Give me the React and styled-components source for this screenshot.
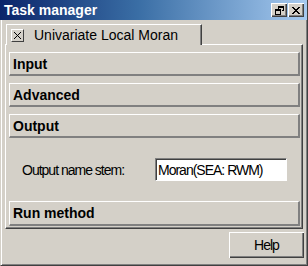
import React from 'react'
import styled, { createGlobalStyle } from 'styled-components'

const face = '#d4d0c8'
const shadow = '#808080'
const dark = '#404040'
const light = '#ffffff'

const GlobalStyle = createGlobalStyle`
  html, body {
    margin: 0;
    padding: 0;
    background: ${face};
  }
`

const Window = styled.div`
  box-sizing: border-box;
  width: 308px;
  height: 266px;
  display: flex;
  flex-direction: column;
  background: ${face};
  border-left: 1px solid ${face};
  border-right: 1px solid ${dark};
  border-bottom: 1px solid ${dark};
  box-shadow: inset 1px 0 0 ${light}, inset -1px -1px 0 ${shadow};
  font-family: 'Liberation Sans', Arial, sans-serif;
  color: #000;
`

const TitleBar = styled.div`
  height: 20px;
  flex: none;
  display: flex;
  align-items: center;
  padding: 0 3px 0 4px;
  margin-left: -1px;
  background: linear-gradient(to right, #0a246a 0%, #3a6ea5 45%, #a6caf0 100%);
`

const Title = styled.span`
  flex: 1;
  color: #fff;
  font-weight: bold;
  font-size: 14px;
`

const CaptionButton = styled.button`
  box-sizing: border-box;
  width: 16px;
  height: 14px;
  padding: 0;
  margin-left: ${p => (p.$gap ? '1px' : '0')};
  display: flex;
  align-items: center;
  justify-content: center;
  background: ${face};
  border: none;
  box-shadow: inset 1px 1px 0 ${light}, inset -1px -1px 0 ${dark}, inset -2px -2px 0 ${shadow};
`

const Body = styled.div`
  flex: 1;
  display: flex;
  flex-direction: column;
  padding: 4px 4px 0 4px;
`

const TabStrip = styled.div`
  display: flex;
  padding-left: 1px;
  position: relative;
  z-index: 1;
`

const Tab = styled.div`
  box-sizing: border-box;
  height: 21px;
  width: 196px;
  display: flex;
  align-items: center;
  gap: 10px;
  padding: 0 0 0 4px;
  background: ${face};
  border-top: 1px solid ${light};
  border-left: 1px solid ${light};
  border-right: 1px solid ${dark};
  box-shadow: inset -1px 0 0 ${shadow};
  font-size: 14px;
`

const CloseBox = styled.span`
  box-sizing: border-box;
  width: 13px;
  height: 13px;
  display: flex;
  align-items: center;
  justify-content: center;
  border-top: 1px solid ${light};
  border-left: 1px solid ${light};
  border-right: 1px solid ${dark};
  border-bottom: 1px solid ${dark};
`

const Pane = styled.div`
  box-sizing: border-box;
  margin-top: -1px;
  display: flex;
  flex-direction: column;
  gap: 7px;
  padding: 7px 2px 2px 3px;
  border-top: 1px solid ${light};
  border-left: 1px solid ${light};
  border-right: 1px solid ${dark};
  border-bottom: 1px solid ${dark};
  box-shadow: inset -1px -1px 0 ${shadow};
`

const SectionHeader = styled.div`
  box-sizing: border-box;
  height: ${p => (p.$tall ? '25px' : '24px')};
  display: flex;
  align-items: center;
  padding-left: 3px;
  font-weight: bold;
  font-size: 14px;
  border-top: 1px solid ${light};
  border-left: 1px solid ${light};
  border-right: 2px solid ${shadow};
  border-bottom: 2px solid ${shadow};
`

const FieldRow = styled.div`
  display: flex;
  align-items: center;
  height: 23px;
  margin: 20px 0 20px 13px;
  font-size: 14px;
  letter-spacing: -1px;
`

const FieldLabel = styled.label`
  width: 133px;
`

const TextBox = styled.div`
  box-sizing: border-box;
  width: 132px;
  height: 23px;
  display: flex;
  align-items: center;
  padding-left: 2px;
  background: #fff;
  border-top: 1px solid ${shadow};
  border-left: 1px solid ${shadow};
  border-right: 1px solid ${light};
  border-bottom: 1px solid ${light};
  box-shadow: inset 1px 1px 0 ${dark};
`

const Footer = styled.div`
  display: flex;
  justify-content: flex-end;
  padding-top: 3px;
`

const HelpButton = styled.button`
  box-sizing: border-box;
  width: 75px;
  height: 26px;
  padding: 0;
  margin-right: -1px;
  background: ${face};
  border: none;
  box-shadow: inset 1px 1px 0 ${light}, inset -1px -1px 0 ${dark}, inset -2px -2px 0 ${shadow};
  font-family: 'Liberation Sans', Arial, sans-serif;
  font-size: 14px;
  letter-spacing: -1px;
  color: #000;
`

const RestoreIcon = () => (
  <svg width="9" height="9" viewBox="0 0 9 9" shapeRendering="crispEdges">
    <path d="M3 0h6v1H3zM3 1h6v1H3zM8 2h1v3H8zM7 4h2v1H7zM3 2h1v1H3z" fill="#000" />
    <path d="M0 3h6v1H0zM0 4h6v1H0zM0 5h1v4H0zM5 5h1v4H5zM0 8h6v1H0z" fill="#000" />
  </svg>
)

const CloseIcon = ({ size = 8 }) => (
  <svg width={size} height={size - 1} viewBox="0 0 8 7" shapeRendering="crispEdges">
    <path d="M0 0h2v1H0zM6 0h2v1H6zM1 1h2v1H1zM5 1h2v1H5zM2 2h4v1H2zM3 3h2v1H3zM2 4h4v1H2zM1 5h2v1H1zM5 5h2v1H5zM0 6h2v1H0zM6 6h2v1H6z" fill="#000" />
  </svg>
)

const SmallX = () => (
  <svg width="7" height="7" viewBox="0 0 7 7" shapeRendering="crispEdges">
    <path d="M0 0h1v1H0zM6 0h1v1H6zM1 1h1v1H1zM5 1h1v1H5zM2 2h1v1H2zM4 2h1v1H4zM3 3h1v1H3zM2 4h1v1H2zM4 4h1v1H4zM1 5h1v1H1zM5 5h1v1H5zM0 6h1v1H0zM6 6h1v1H6z" fill="#000" />
  </svg>
)

export default function App() {
  return (
    <>
      <GlobalStyle />
      <Window>
        <TitleBar>
          <Title>Task manager</Title>
          <CaptionButton aria-label="Restore"><RestoreIcon /></CaptionButton>
          <CaptionButton $gap aria-label="Close"><CloseIcon /></CaptionButton>
        </TitleBar>
        <Body>
          <TabStrip>
            <Tab>
              <CloseBox><SmallX /></CloseBox>
              <span>Univariate Local Moran</span>
            </Tab>
          </TabStrip>
          <Pane>
            <SectionHeader>Input</SectionHeader>
            <SectionHeader>Advanced</SectionHeader>
            <div>
              <SectionHeader>Output</SectionHeader>
              <FieldRow>
                <FieldLabel>Output name stem:</FieldLabel>
                <TextBox>Moran(SEA: RWM)</TextBox>
              </FieldRow>
              <SectionHeader $tall>Run method</SectionHeader>
            </div>
          </Pane>
          <Footer>
            <HelpButton>Help</HelpButton>
          </Footer>
        </Body>
      </Window>
    </>
  )
}
